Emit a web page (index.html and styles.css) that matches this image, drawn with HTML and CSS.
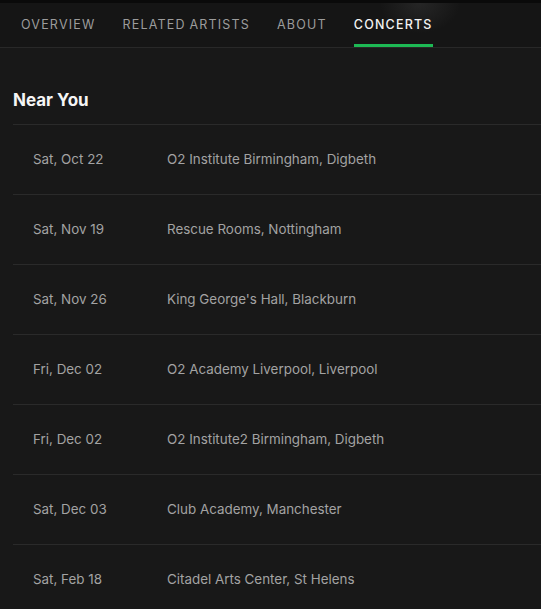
FILE: index.html
```html
<!DOCTYPE html>
<html lang="en">
<head>
<meta charset="utf-8">
<title>Concerts</title>
<link rel="stylesheet" href="styles.css">
</head>
<body>
<div class="topstrip"></div>
<nav class="tabs">
  <a class="tab">Overview</a>
  <a class="tab">Related Artists</a>
  <a class="tab">About</a>
  <a class="tab active">Concerts</a>
</nav>
<main class="content">
  <h2 class="heading">Near You</h2>
  <ul class="concerts">
    <li class="row"><span class="date">Sat, Oct 22</span><span class="venue">O2 Institute Birmingham, Digbeth</span></li>
    <li class="row"><span class="date">Sat, Nov 19</span><span class="venue">Rescue Rooms, Nottingham</span></li>
    <li class="row"><span class="date">Sat, Nov 26</span><span class="venue">King George's Hall, Blackburn</span></li>
    <li class="row"><span class="date">Fri, Dec 02</span><span class="venue">O2 Academy Liverpool, Liverpool</span></li>
    <li class="row"><span class="date">Fri, Dec 02</span><span class="venue">O2 Institute2 Birmingham, Digbeth</span></li>
    <li class="row"><span class="date">Sat, Dec 03</span><span class="venue">Club Academy, Manchester</span></li>
    <li class="row"><span class="date">Sat, Feb 18</span><span class="venue">Citadel Arts Center, St Helens</span></li>
  </ul>
</main>
<div class="bottomstrip"></div>
</body>
</html>
```

FILE: styles.css
```css
* { box-sizing: border-box; }
html, body {
  margin: 0;
  padding: 0;
  background: #181818;
  height: 609px;
  overflow: hidden;
}
body {
  font-family: Inter, "Liberation Sans", sans-serif;
  color: #a0a0a0;
  display: flex;
  flex-direction: column;
}
.topstrip {
  height: 3px;
  background: #0a0a0a;
  flex: none;
}
.tabs {
  flex: none;
  height: 45px;
  display: flex;
  align-items: stretch;
  padding-left: 21px;
  gap: 27px;
  background: radial-gradient(ellipse 40px 30px at 420px 0px, #262626, transparent), #151515;
  border-bottom: 1px solid #282828;
}
.tab {
  display: flex;
  align-items: center;
  padding-top: 1px;
  font-size: 12.5px;
  letter-spacing: 1.2px;
  word-spacing: -1px;
  text-transform: uppercase;
  color: #9c9c9c;
  border-bottom: 3px solid transparent;
}
.tab.active {
  color: #f2f2f2;
  font-weight: 500;
  border-bottom-color: #1db954;
}
.content {
  flex: 1;
  padding-left: 13px;
}
.heading {
  margin: 0;
  height: 76px;
  padding-top: 42px;
  font-size: 17px;
  font-weight: 700;
  color: #f5f5f5;
  line-height: 20px;
}
.concerts {
  list-style: none;
  margin: 0;
  padding: 0;
}
.row {
  display: flex;
  align-items: center;
  height: 70px;
  border-top: 1px solid #2a2a2a;
  padding-left: 20px;
  padding-bottom: 2px;
  font-size: 13.4px;
  color: #a3a3a3;
}
.date { width: 134px; flex: none; }
.bottomstrip {
  flex: none;
  height: 2px;
  background: #202020;
}
```
